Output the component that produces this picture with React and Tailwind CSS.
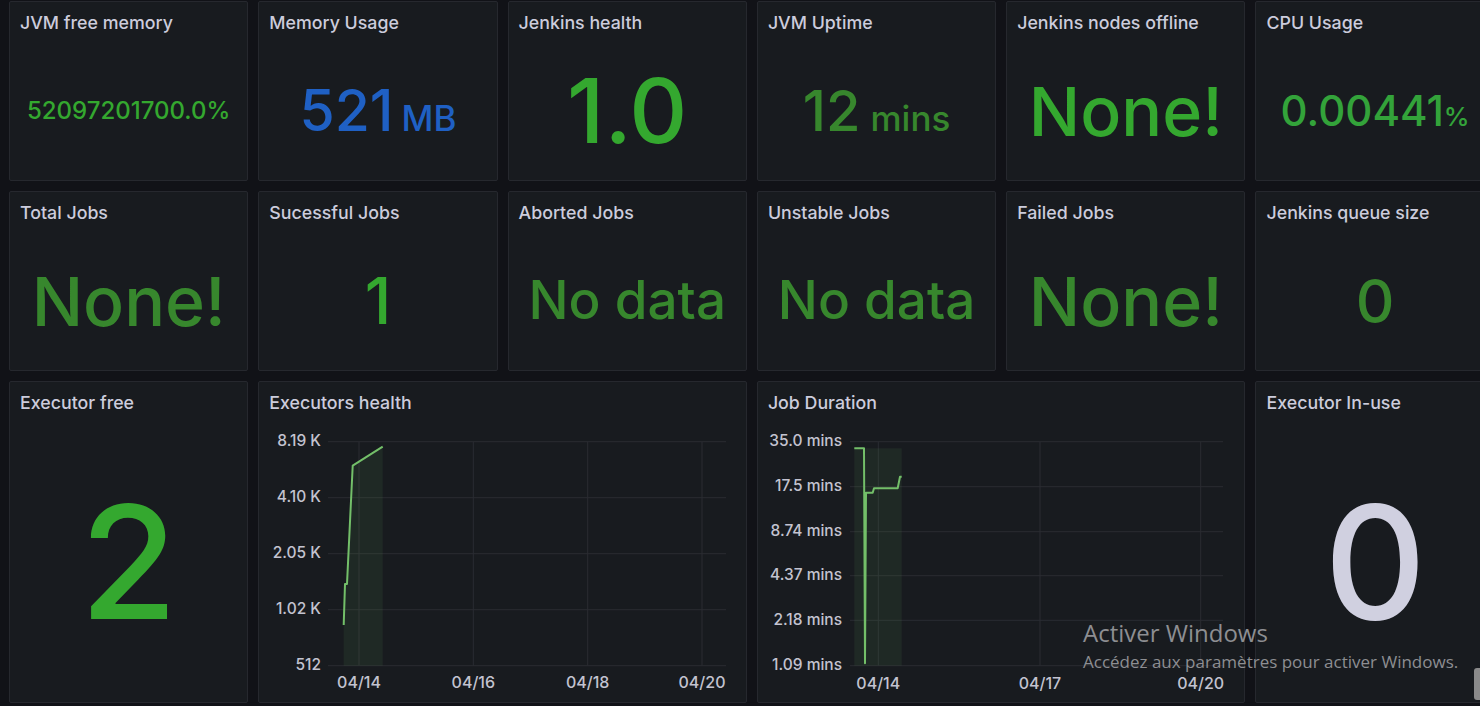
import React from "react";

const Panel = ({ title, children, className = "" }) => (
  <div
    className={
      "flex flex-col rounded-[2px] border border-[#26282e] bg-[#181b1f] overflow-hidden min-w-0 " +
      className
    }
  >
    <div className="h-[39px] shrink-0 flex items-center px-[10px] pt-[2px] text-[17.8px] font-medium text-[#ccccdc] leading-none whitespace-nowrap">
      {title}
    </div>
    <div className="flex-1 min-h-0 flex items-center justify-center">{children}</div>
  </div>
);

const BRIGHT = "text-[#34a82f]";
const AX = { fontSize: 15.5, fill: "#c3c3d0", fontFamily: "Inter, sans-serif", fontWeight: 500 };
const AXX = { fontSize: 16, fill: "#c3c3d0", fontFamily: "Inter, sans-serif", fontWeight: 500 };

const HealthChart = () => {
  const ys = [441.7, 497.7, 553.7, 609.7, 665.7];
  const yl = ["8.19 K", "4.10 K", "2.05 K", "1.02 K", "512"];
  const xs = [358, 472.3, 586.7, 701];
  const xl = ["04/14", "04/16", "04/18", "04/20"];
  return (
    <svg width="486" height="280" className="block">
      <g transform="translate(-259,-422)">
        {ys.map((y) => (
          <line key={y} x1="327" x2="725" y1={y} y2={y} stroke="#2a2c32" strokeWidth="1" />
        ))}
        {xs.map((x) => (
          <line key={x} x1={x} x2={x} y1="441.7" y2="665.7" stroke="#2a2c32" strokeWidth="1" />
        ))}
        {ys.map((y, i) => (
          <text key={i} x="320" y={y} textAnchor="end" dominantBaseline="middle" style={AX}>
            {yl[i]}
          </text>
        ))}
        {xs.map((x, i) => (
          <text key={i} x={x} y="684" textAnchor="middle" dominantBaseline="middle" style={AXX}>
            {xl[i]}
          </text>
        ))}
        <path
          d="M342.7,625 L344,584 L346,584 L351.7,465.7 L381.7,446.7 L381.7,665.7 L342.7,665.7 Z"
          fill="rgba(115,191,105,0.09)"
        />
        <path
          d="M342.7,625 L344,584 L346,584 L351.7,465.7 L381.7,446.7"
          fill="none"
          stroke="#73bf69"
          strokeWidth="2"
          strokeLinejoin="round"
        />
      </g>
    </svg>
  );
};

const DurationChart = () => {
  const ys = [441.7, 486.7, 531.7, 575.7, 620.3, 665.7];
  const yl = ["35.0 mins", "17.5 mins", "8.74 mins", "4.37 mins", "2.18 mins", "1.09 mins"];
  const xs = [878.3, 1040, 1200.7];
  const xl = ["04/14", "04/17", "04/20"];
  const line =
    "M854.3,448.3 L864,448.3 L865,663.3 L866,492.7 L872.7,492.7 L874,488.3 L897.7,488.3 L900,476.7 L901.7,476.7";
  return (
    <svg width="486" height="280" className="block">
      <g transform="translate(-758,-422)">
        {ys.map((y) => (
          <line key={y} x1="850" x2="1223" y1={y} y2={y} stroke="#2a2c32" strokeWidth="1" />
        ))}
        {xs.map((x) => (
          <line key={x} x1={x} x2={x} y1="441.7" y2="665.7" stroke="#2a2c32" strokeWidth="1" />
        ))}
        {ys.map((y, i) => (
          <text key={i} x="842" y={y} textAnchor="end" dominantBaseline="middle" style={AX}>
            {yl[i]}
          </text>
        ))}
        {xs.map((x, i) => (
          <text key={i} x={x} y="685" textAnchor="middle" dominantBaseline="middle" style={AXX}>
            {xl[i]}
          </text>
        ))}
        <rect x="854.3" y="448.3" width="47.4" height="217.4" fill="rgba(115,191,105,0.09)" />
        <path d={line} fill="none" stroke="#73bf69" strokeWidth="2" strokeLinejoin="round" />
      </g>
    </svg>
  );
};

export default function App() {
  return (
    <div className="relative w-[1480px] h-[706px] overflow-hidden bg-[#111217] font-['Inter',sans-serif]">
      <div className="grid grid-cols-[repeat(6,239.3px)] grid-rows-[180px_180px_322px] gap-x-[10px] gap-y-[10px] pl-[9px] pt-[1px]">
        {/* Row 1 */}
        <Panel title="JVM free memory">
          <span className={"text-[24px] font-medium leading-none " + BRIGHT}>52097201700.0%</span>
        </Panel>
        <Panel title="Memory Usage">
          <span className="flex items-baseline leading-none text-[#1f60c4] font-medium">
            <span className="text-[57px]">521</span>
            <span className="text-[35px] ml-[8px]">MB</span>
          </span>
        </Panel>
        <Panel title="Jenkins health">
          <span className={"text-[90px] font-medium leading-none " + BRIGHT}>1.0</span>
        </Panel>
        <Panel title="JVM Uptime">
          <span className="flex items-baseline leading-none text-[#37872d] font-medium">
            <span className="text-[56px]">12</span>
            <span className="text-[35px] ml-[10px]">mins</span>
          </span>
        </Panel>
        <Panel title="Jenkins nodes offline">
          <span className={"text-[68px] font-medium leading-none " + BRIGHT}>None!</span>
        </Panel>
        <Panel title="CPU Usage">
          <span className="flex items-baseline leading-none text-[#33a33a] font-medium">
            <span className="text-[42px]">0.00441</span>
            <span className="text-[26px]">%</span>
          </span>
        </Panel>

        {/* Row 2 */}
        <Panel title="Total Jobs">
          <span className="text-[68px] font-medium leading-none text-[#37872d]">None!</span>
        </Panel>
        <Panel title="Sucessful Jobs">
          <span className={"text-[64px] font-medium leading-none " + BRIGHT}>1</span>
        </Panel>
        <Panel title="Aborted Jobs">
          <span className="text-[53px] font-medium leading-none text-[#37872d]">No data</span>
        </Panel>
        <Panel title="Unstable Jobs">
          <span className="text-[53px] font-medium leading-none text-[#37872d]">No data</span>
        </Panel>
        <Panel title="Failed Jobs">
          <span className="text-[68px] font-medium leading-none text-[#37872d]">None!</span>
        </Panel>
        <Panel title="Jenkins queue size">
          <span className="text-[60px] font-medium leading-none text-[#37872d]">0</span>
        </Panel>

        {/* Row 3 */}
        <Panel title="Executor free">
          <span className={"text-[158px] font-medium leading-none " + BRIGHT}>2</span>
        </Panel>
        <Panel title="Executors health" className="col-span-2">
          <HealthChart />
        </Panel>
        <Panel title="Job Duration" className="col-span-2">
          <DurationChart />
        </Panel>
        <Panel title="Executor In-use">
          <span className="text-[158px] font-medium leading-none text-[#d0d0e0]">0</span>
        </Panel>
      </div>

      {/* Windows activation watermark */}
      <div className="absolute left-[1083px] top-[621px] pointer-events-none font-['Open_Sans',sans-serif] text-[#8d8e92] leading-none">
        <div className="text-[24px]">Activer Windows</div>
        <div className="text-[17px] mt-[8px]">Accédez aux paramètres pour activer Windows.</div>
      </div>
      <div className="absolute left-[1474px] top-[668px] w-[6px] h-[32px] rounded-l-[3px] bg-[#8a8a8a]" />
    </div>
  );
}
